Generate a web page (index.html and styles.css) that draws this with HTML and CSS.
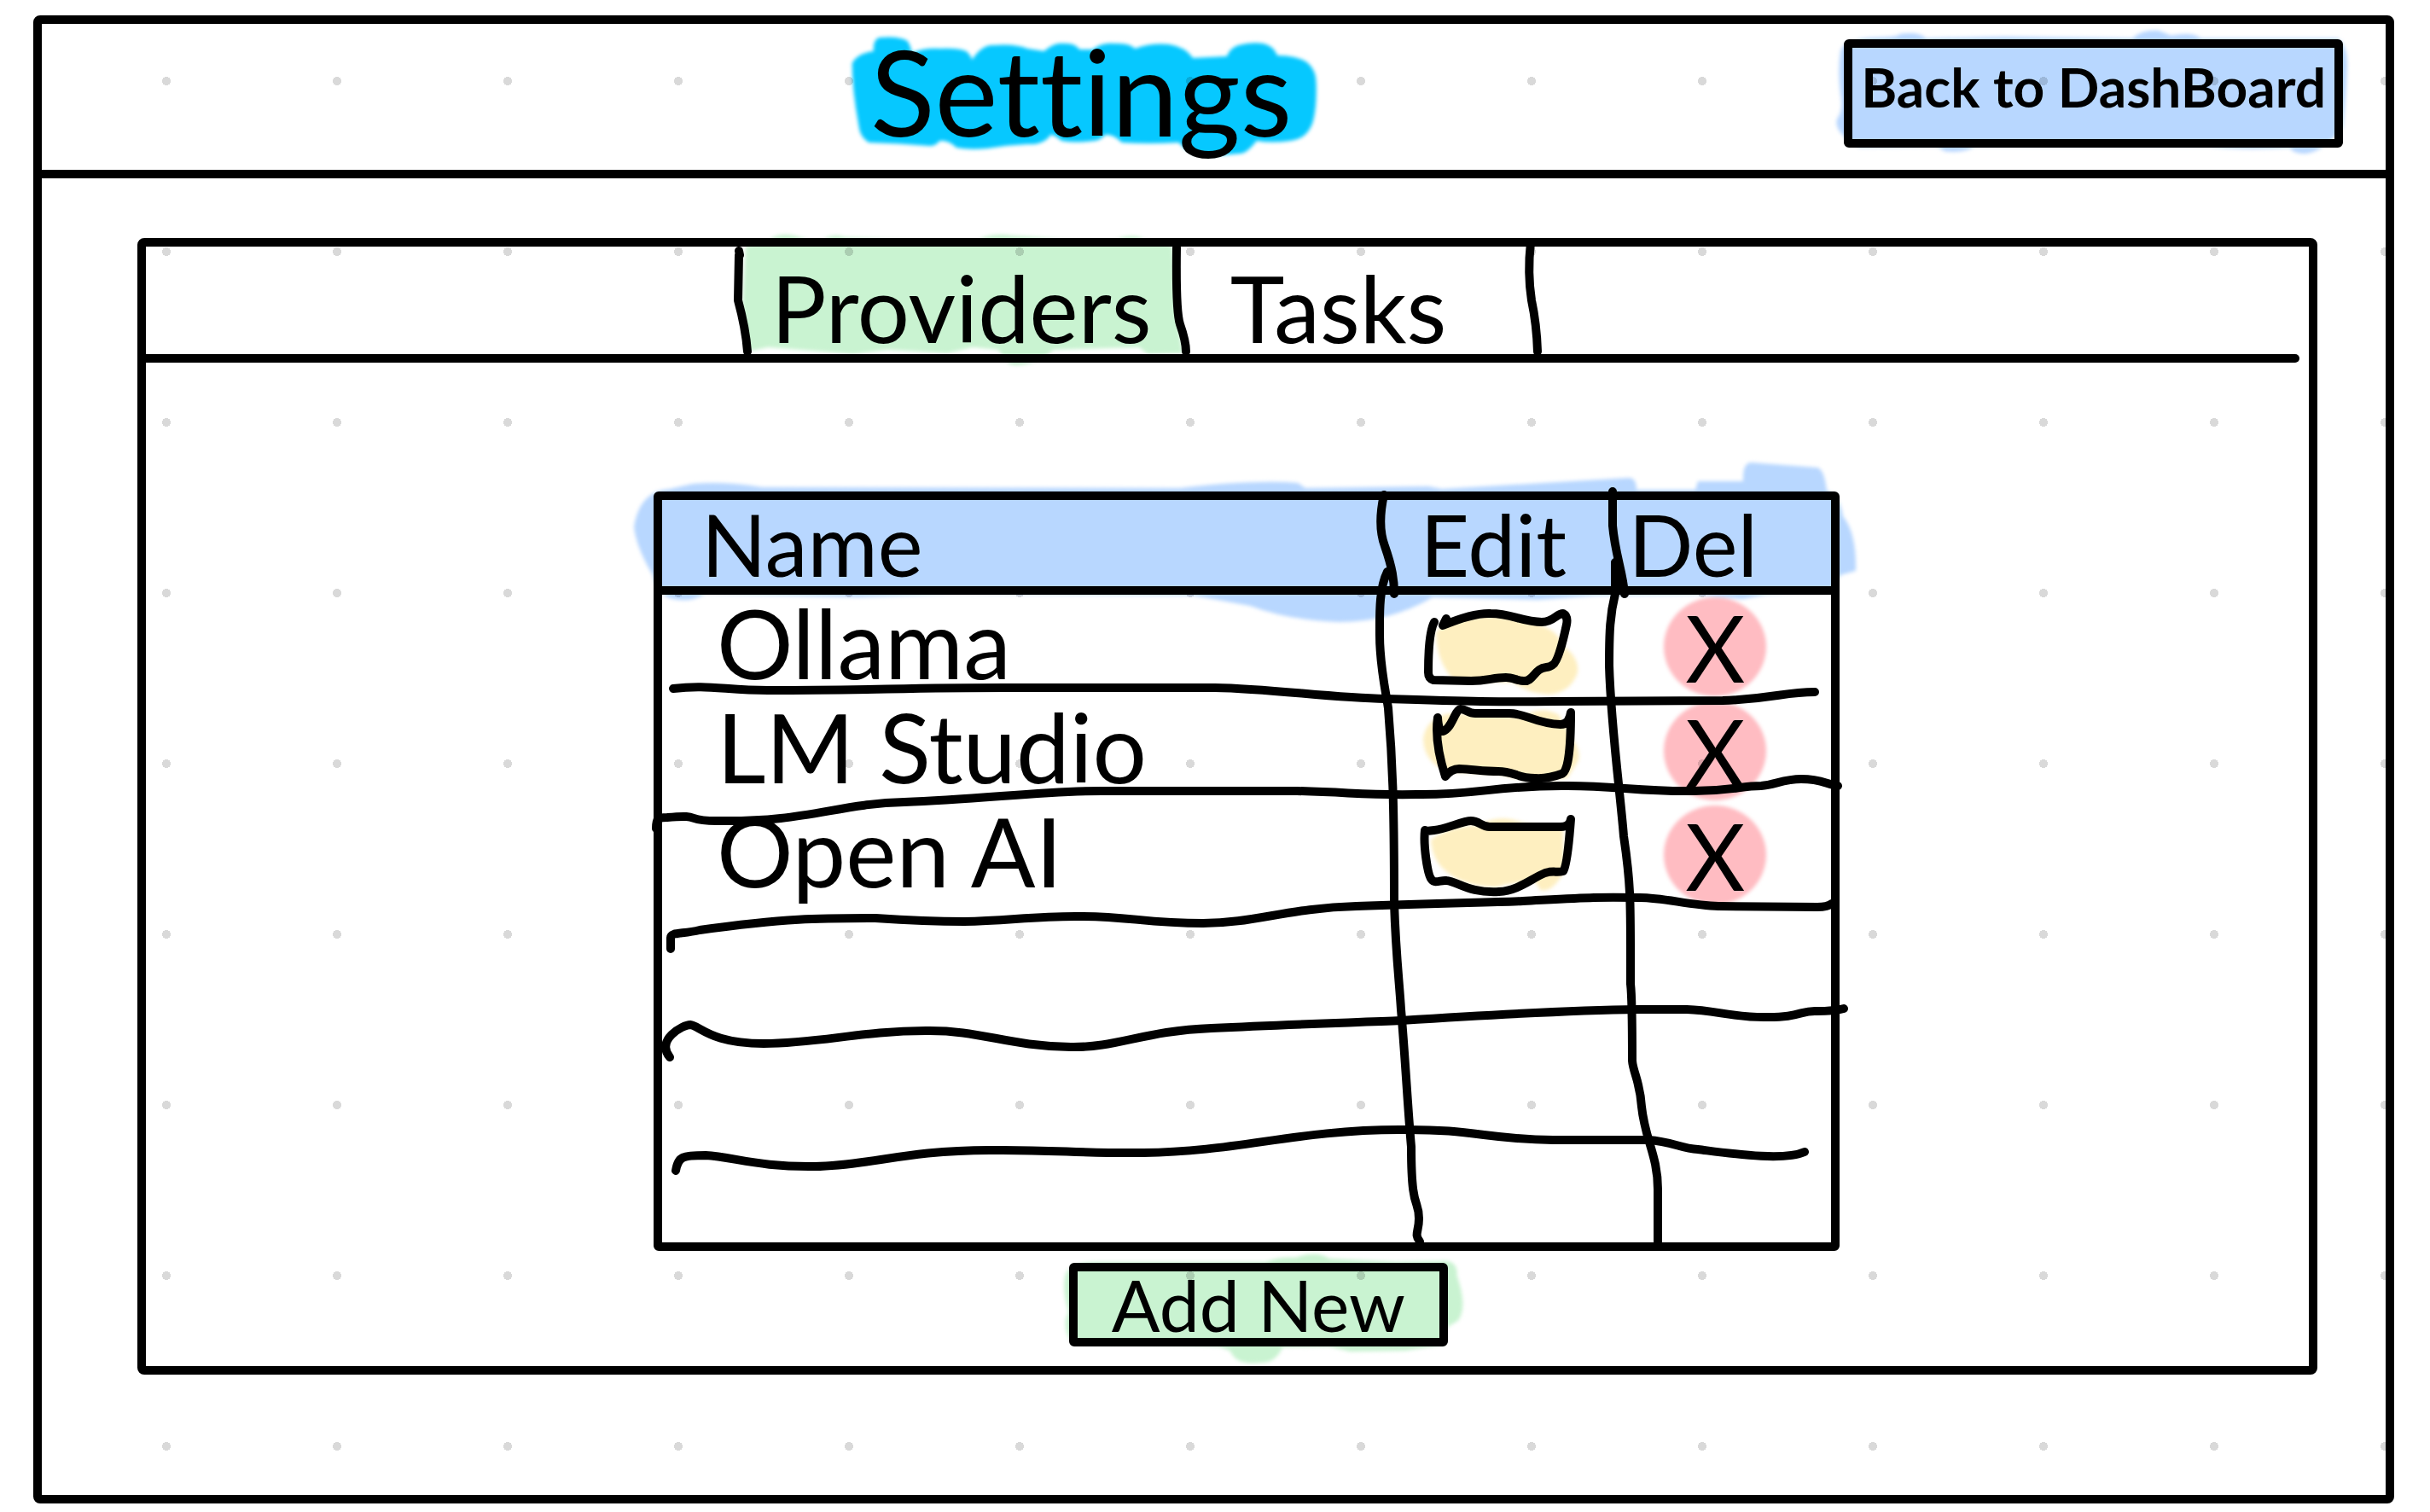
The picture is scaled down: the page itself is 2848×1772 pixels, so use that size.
FILE: index.html
```html
<!DOCTYPE html>
<html lang="en">
<head>
<meta charset="utf-8">
<meta name="viewport" content="width=device-width, initial-scale=1">
<title>Settings</title>
<link rel="stylesheet" href="styles.css">
</head>
<body>
<div class="frame">
  <header class="topbar">
    <h1 class="title">Settings
      <svg class="marker marker-cyan" viewBox="1015 28 510 171" preserveAspectRatio="none" aria-hidden="true"><path d="M993 74Q1000 62 1019 60Q1018 46 1026 44Q1050 42 1060 48Q1064 54 1065 62Q1080 56 1099 57Q1120 56 1131 60Q1136 64 1138 70Q1150 52 1164 53Q1190 51 1205 57L1225 60Q1238 49 1250 51Q1262 50 1268 58L1284 58Q1295 49 1311 51Q1328 50 1335 57Q1355 50 1376 52Q1396 55 1405 68L1446 66Q1450 56 1460 53Q1475 49 1490 51Q1503 54 1507 65Q1530 65 1543 73Q1554 82 1554 97Q1555 125 1550 143Q1543 163 1523 165Q1500 168 1482 165Q1470 180 1462 180Q1430 183 1409 180Q1395 176 1388 167Q1350 169 1319 167Q1309 157 1299 158Q1292 165 1286 165Q1265 168 1246 165Q1238 158 1233 158Q1225 170 1205 169Q1180 170 1156 174Q1135 176 1119 173Q1110 164 1099 165Q1094 171 1087 171Q1050 168 1013 167Q1002 160 1001 147Q993 105 993 74Z"/></svg>
    </h1>
    <a class="back" href="#dashboard">Back to DashBoard
      <svg class="marker marker-blue" viewBox="2172 57 564 106" preserveAspectRatio="none" aria-hidden="true"><path d="M2158 62Q2160 46 2200 45Q2225 45 2228 41Q2250 38 2258 46L2350 44L2500 46Q2510 36 2530 37L2545 43Q2570 38 2580 46L2740 46Q2752 55 2751 80Q2750 110 2746 150Q2720 180 2700 180Q2688 180 2684 173Q2630 176 2590 172L2315 172Q2300 180 2280 177Q2272 172 2270 172L2180 173Q2150 155 2154 140Q2162 130 2158 110Q2155 85 2158 62Z"/></svg>
    </a>
  </header>

  <main class="panel">
    <div class="tabs" role="tablist">
      <button class="tab tab-active" role="tab" aria-selected="true" type="button">Providers
        <svg class="marker marker-green" viewBox="868 289 517 126" preserveAspectRatio="none" aria-hidden="true"><path d="M874 288L898 284Q910 272 930 276L960 284Q975 272 990 278L1140 284Q1160 272 1185 276L1300 284Q1325 272 1340 280L1374 288L1378 360L1386 414L1345 415L1335 407L1235 410Q1218 425 1200 427Q1185 430 1180 424L1170 410L1140 407L1110 414L1040 410L1000 415L900 407L877 412L870 360Z"/></svg>
        <svg class="ink" viewBox="868 289 517 126" preserveAspectRatio="none" aria-hidden="true"><path d="M866 294L867 299M866 299L865 352Q874 385 876 412M1379 290Q1378 365 1383 380Q1390 400 1390 412"/></svg>
      </button>
      <button class="tab tab-tasks" role="tab" aria-selected="false" type="button">Tasks
        <svg class="ink" viewBox="1385 289 415 126" preserveAspectRatio="none" aria-hidden="true"><path d="M1794 284Q1790 320 1795 352Q1801 380 1802 412"/></svg>
      </button>
    </div>
    <hr class="tab-rule">

    <div class="content">
      <div class="providers">
        <div class="sheet">
          <table>
            <colgroup><col class="col-name"><col class="col-edit"><col></colgroup>
            <thead>
              <tr><th scope="col">Name</th><th scope="col" class="th-edit">Edit</th><th scope="col" class="th-del">Del</th></tr>
            </thead>
            <tbody>
              <tr>
                <td>Ollama</td>
                <td class="action"><button class="edit" type="button" aria-label="Edit Ollama">
                  <svg viewBox="1654 703 200 110" aria-hidden="true"><path class="fill" d="M1684 740Q1710 722 1748 722Q1785 724 1805 732Q1828 740 1832 756Q1852 770 1850 788Q1842 812 1815 814Q1790 812 1775 800L1705 797Q1684 775 1684 740Z"/><path class="line" d="M1696 725L1692 733Q1728 718 1748 719C1772 719 1786 729 1808 729C1822 729 1825 719 1833 719Q1839 722 1837 732Q1828 775 1821 779C1815 784 1812 780 1805 785C1798 790 1795 799 1787 798C1780 798 1774 794 1766 794C1750 794 1745 798 1725 798L1681 797Q1675 795 1675 788Q1675 742 1682 729"/></svg>
                </button></td>
                <td class="action action-delete"><button class="delete" type="button" aria-label="Delete Ollama">X</button></td>
              </tr>
              <tr>
                <td>LM Studio</td>
                <td class="action"><button class="edit" type="button" aria-label="Edit LM Studio">
                  <svg viewBox="1654 825 200 110" aria-hidden="true"><path class="fill" d="M1669 866Q1672 842 1700 836L1785 840Q1808 826 1828 838L1840 860Q1856 880 1850 893L1838 912Q1790 918 1760 908L1700 905Q1670 895 1669 866Z"/><path class="line" d="M1686 841Q1687 858 1692 857C1702 855 1706 832 1713 831C1719 831 1722 836 1730 836L1770 836C1790 836 1800 848 1830 849Q1840 849 1842 835Q1842 905 1831 907Q1815 913 1800 912C1780 912 1775 904 1757 904C1740 904 1730 902 1711 901Q1702 901 1695 910Q1682 870 1686 841"/></svg>
                </button></td>
                <td class="action action-delete"><button class="delete" type="button" aria-label="Delete LM Studio">X</button></td>
              </tr>
              <tr>
                <td>Open AI</td>
                <td class="action"><button class="edit" type="button" aria-label="Edit Open AI">
                  <svg viewBox="1654 947 200 110" aria-hidden="true"><path class="fill" d="M1678 984Q1700 968 1735 967Q1758 953 1785 964L1833 972L1834 1022Q1820 1047 1806 1043L1800 1033Q1765 1035 1755 1040Q1715 1038 1697 1022Q1680 1010 1678 984Z"/><path class="line" d="M1673 974L1682 973C1695 972 1715 962 1725 962C1735 962 1737 969 1747 969L1830 969Q1841 969 1842 960Q1838 1015 1833 1021C1825 1023 1822 1020 1812 1023C1795 1030 1780 1044 1758 1045C1722 1047 1710 1033 1696 1032C1690 1031 1683 1036 1679 1031C1674 1026 1669 990 1671 973"/></svg>
                </button></td>
                <td class="action action-delete"><button class="delete" type="button" aria-label="Delete Open AI">X</button></td>
              </tr>
              <tr class="blank"><td></td><td></td><td></td></tr>
              <tr class="blank"><td></td><td></td><td></td></tr>
              <tr class="blank"><td></td><td></td><td></td></tr>
            </tbody>
          </table>
          <svg class="ink" viewBox="776 586 1370 870" preserveAspectRatio="none" aria-hidden="true">
            <path d="M789 807C830 802 850 809 900 809C1020 809 1060 806 1179 806L1424 806C1490 807 1560 818 1624 819C1720 822 1760 823 1821 822L2019 821C2080 819 2090 811 2127 811"/>
            <path d="M769 971C769 959 771 958 782 958C825 954 800 962 840 962C945 964 980 942 1060 940C1150 937 1220 927 1291 927L1520 927C1590 929 1600 932 1660 931C1730 932 1750 921 1830 921C1890 920 1920 928 1985 927C2030 927 2040 921 2064 921C2080 920 2090 913 2111 913C2135 913 2140 919 2154 921"/>
            <path d="M786 1112V1099C786 1092 800 1095 820 1090C920 1076 960 1076 1026 1076C1070 1079 1100 1080 1130 1080C1180 1079 1210 1074 1260 1074C1320 1073 1340 1082 1410 1082C1470 1082 1510 1064 1590 1062C1690 1058 1740 1058 1785 1056C1860 1052 1870 1051 1922 1052C1950 1052 1980 1061 2014 1062L2130 1063Q2142 1063 2147 1059"/>
            <path d="M785 1239C768 1219 800 1201 809 1201C820 1202 833 1223 895 1223C960 1223 1010 1208 1085 1208C1150 1207 1180 1226 1255 1227C1310 1228 1340 1208 1420 1205C1520 1200 1600 1198 1642 1196C1720 1191 1840 1184 1920 1183L1977 1183C2010 1184 2030 1192 2067 1192C2110 1193 2110 1184 2129 1185Q2150 1185 2161 1182"/>
            <path d="M792 1372C795 1355 800 1354 827 1354C860 1356 890 1368 955 1367C1020 1366 1060 1348 1160 1348C1230 1347 1270 1352 1340 1351C1450 1350 1520 1324 1640 1324C1730 1323 1740 1335 1820 1336L1932 1336C1960 1338 1970 1346 1990 1347C2030 1352 2090 1361 2115 1350"/>
            <path d="M1622 580Q1614 616 1623 640C1632 666 1634 680 1634 696M1626 670C1616 690 1617 720 1617 744C1617 780 1624 810 1627 830C1632 890 1634 940 1634 1058C1636 1120 1640 1150 1642 1183C1647 1240 1650 1300 1654 1344C1654 1422 1663 1404 1663 1428C1663 1444 1657 1446 1664 1455"/>
            <path d="M1890 576V616C1893 650 1902 670 1904 696M1893 659V696C1887 720 1886 740 1886 780C1888 850 1899 930 1903 980C1912 1040 1911 1060 1911 1153Q1913 1170 1913 1243C1914 1257 1922 1267 1924 1297C1928 1336 1943 1354 1943 1394V1455"/>
          </svg>
          <svg class="marker marker-blue" viewBox="776 586 1370 870" preserveAspectRatio="none" aria-hidden="true"><path d="M743 617Q750 575 785 573L812 567Q850 564 893 571L1383 572Q1470 562 1521 566L1530 572L1674 570L1690 573L1909 560Q1918 560 1918 574L1987 574L1990 564L2043 564Q2042 543 2052 542L2130 548Q2138 550 2141 575Q2156 580 2160 605Q2176 625 2175 669L2157 674L2146 694L2070 697L2042 702L1990 697L1870 698L1803 703L1679 700Q1630 729 1569 729Q1510 727 1465 710L1399 698L1120 696L1006 700L827 696Q810 705 797 703Q780 702 776 694Q768 688 765 674Q745 640 743 617Z"/></svg>
        </div>
        <button class="add" type="button">Add New
          <svg class="marker marker-green" viewBox="1263 1497 428 78" preserveAspectRatio="none" aria-hidden="true"><path d="M1249 1500Q1255 1485 1290 1486L1485 1486Q1500 1480 1520 1481Q1545 1472 1560 1482L1640 1486L1690 1485Q1712 1482 1711 1502Q1724 1540 1712 1555L1700 1562L1695 1583L1650 1590L1585 1591L1560 1585L1505 1586Q1497 1604 1480 1604Q1450 1608 1443 1590L1430 1585L1255 1580Q1244 1560 1252 1545Q1244 1515 1249 1500Z"/></svg>
        </button>
      </div>
    </div>
  </main>
</div>
</body>
</html>
```
FILE: styles.css
```css
* {
  box-sizing: border-box;
}

body {
  margin: 0;
  padding: 18px 42px 10px 39px;
  background: #fff radial-gradient(circle at 100px 100px, #d9d9d9 5px, transparent 5px) 95px -5px / 200px 200px;
  color: #000;
  font-family: Lato, "Open Sans", sans-serif;
  font-size: 112px;
  font-variant-ligatures: none;
  line-height: 1;
}

button {
  margin: 0;
  padding: 0;
  border: 0;
  background: none;
  color: inherit;
  font: inherit;
  cursor: pointer;
}

.frame {
  border: 10px solid #000;
  border-radius: 8px;
}

/* Hand-drawn layers stretched over their parent */
.marker,
.ink {
  position: absolute;
  inset: 0;
  width: 100%;
  height: 100%;
  overflow: visible;
  pointer-events: none;
}

.marker {
  mix-blend-mode: multiply;
  filter: blur(2px);
}

.marker-cyan { fill: #06c8ff; }
.marker-blue { fill: #b8d7ff; }
.marker-green { fill: #c9f3d1; }

.ink {
  fill: none;
  stroke: #000;
  stroke-width: 10px;
  stroke-linecap: round;
  stroke-linejoin: round;
}

/* Top bar */
.topbar {
  display: grid;
  grid-template-columns: 36% 1fr auto;
  height: 181px;
  padding-right: 50px;
  border-bottom: 10px solid #000;
}

.title {
  position: relative;
  grid-column: 2;
  justify-self: start;
  margin: 0;
  font-size: 140px;
  font-weight: 400;
  line-height: 156px;
}

.back {
  position: relative;
  grid-column: 3;
  align-self: start;
  height: 127px;
  margin-top: 18px;
  padding: 0 10px;
  border: 10px solid #000;
  border-radius: 6px;
  color: inherit;
  font-size: 64px;
  font-weight: 700;
  line-height: 92px;
  text-decoration: none;
  white-space: nowrap;
}

/* Panel */
.panel {
  margin: 70px 80px 141px 112px;
  border: 10px solid #000;
  border-radius: 8px;
}

.tabs {
  display: flex;
  height: 126px;
  padding-left: 27.5%;
}

.tab {
  position: relative;
  width: 517px;
  padding-top: 16px;
  font-size: 108px;
}

.tab-tasks {
  width: 415px;
  padding-right: 48px;
}

.tab-rule {
  height: 10px;
  margin: 0 11px 0 0;
  border: 0;
  border-radius: 0 5px 5px 0;
  background: #000;
}

.content {
  display: grid;
  grid-template-columns: 595fr 1390fr 550fr;
  padding: 151px 0 23px;
}

.providers {
  grid-column: 2;
  display: flex;
  flex-direction: column;
  gap: 14px;
}

.sheet {
  position: relative;
  border: 10px solid #000;
  border-radius: 6px;
}

table {
  width: 100%;
  table-layout: fixed;
  border-spacing: 0;
}

.col-name { width: 61.5%; }
.col-edit { width: 19.7%; }

th {
  height: 111px;
  padding: 0 0 0 46px;
  border-bottom: 10px solid #000;
  font-size: 100px;
  font-weight: 400;
  text-align: left;
}

th.th-del {
  padding-left: 20px;
}

td {
  height: 122px;
  padding: 0 0 10px 64px;
  white-space: nowrap;
}

td.action {
  padding: 0;
  text-align: center;
}

td.action-delete {
  padding-right: 14px;
}

.blank td {
  height: 131px;
}

.edit,
.delete {
  display: block;
  margin: 0 auto;
}

.edit svg {
  display: block;
  width: 200px;
  height: 110px;
  overflow: visible;
}

.edit .fill {
  fill: #feefc0;
  filter: blur(2px);
}

.edit .line {
  fill: none;
  stroke: #000;
  stroke-width: 10px;
  stroke-linecap: round;
  stroke-linejoin: round;
}

.delete {
  position: relative;
  width: 120px;
  height: 116px;
  font-size: 108px;
}

.delete::after {
  content: "";
  position: absolute;
  inset: 0;
  border-radius: 50%;
  background: #ffbcc2;
  filter: blur(2px);
  mix-blend-mode: multiply;
}

.add {
  position: relative;
  width: 32%;
  height: 98px;
  margin-left: 35%;
  border: 10px solid #000;
  border-radius: 6px;
  font-size: 84px;
  line-height: 78px;
}
```
